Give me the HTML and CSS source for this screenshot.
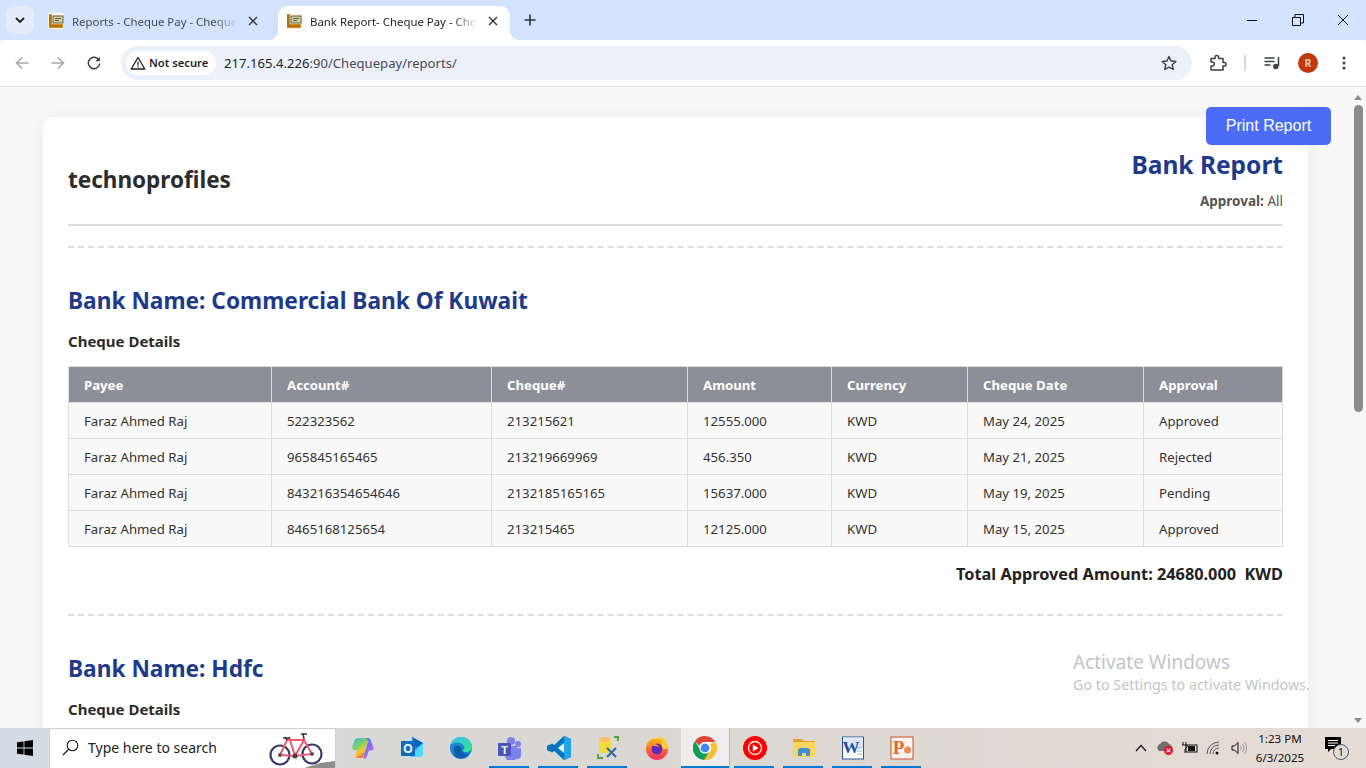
FILE: index.html
```html
<!DOCTYPE html>
<html lang="en">
<head>
<meta charset="utf-8">
<title>Bank Report- Cheque Pay</title>
<link rel="stylesheet" href="styles.css">
</head>
<body>
<svg class="defs" width="0" height="0">
  <symbol id="fav" viewBox="0 0 16 16">
    <rect x="0" y="0" width="16" height="16" fill="#fbf6e6"/>
    <path d="M1 1h3v10h11v4H1z" fill="#d98a1e"/>
    <path d="M2 2v11h12" fill="none" stroke="#8a5a10" stroke-width="1"/>
    <rect x="5" y="3" width="10" height="7" fill="#d8d0a6" stroke="#5f5a3a" stroke-width="1"/>
    <path d="M7 5.500h6M7 7.500h4" stroke="#5f5a3a" stroke-width="1"/>
  </symbol>
  <symbol id="x" viewBox="0 0 10 10"><path d="M1 1l8 8M9 1l-8 8" fill="none" stroke="currentColor" stroke-width="1.400"/></symbol>
</svg>

<header class="tabstrip">
  <button class="tabsearch"><svg width="10" height="6" viewBox="0 0 10 6"><path d="M1 1l4 4 4-4" fill="none" stroke="#1f1f1f" stroke-width="1.800"/></svg></button>
  <div class="tab">
    <svg class="favicon" width="16" height="16"><use href="#fav"/></svg>
    <span class="tab-title">Reports - Cheque Pay - Cheque Pay</span>
    <svg class="tab-close" width="10" height="10"><use href="#x"/></svg>
  </div>
  <div class="tab tab-active">
    <svg class="favicon" width="16" height="16"><use href="#fav"/></svg>
    <span class="tab-title">Bank Report- Cheque Pay - Cheque Pay</span>
    <svg class="tab-close" width="10" height="10"><use href="#x"/></svg>
  </div>
  <svg class="newtab" width="12" height="12" viewBox="0 0 12 12"><path d="M6 .5v11M.5 6h11" stroke="#333" stroke-width="1.600"/></svg>
  <div class="winctl">
    <svg width="12" height="12" viewBox="0 0 12 12"><path d="M1 6.500h10" stroke="#111" stroke-width="1"/></svg>
    <svg width="12" height="12" viewBox="0 0 12 12"><path d="M.5 3.500h8v8h-8zM3 3.500V.5h8.500V9H8.500" fill="none" stroke="#111" stroke-width="1"/></svg>
    <svg width="12" height="12" viewBox="0 0 12 12"><path d="M1 1l10 10M11 1L1 11" stroke="#111" stroke-width="1"/></svg>
  </div>
</header>

<nav class="toolbar">
  <svg class="navicon" width="14" height="14" viewBox="0 0 14 14"><path d="M13.500 7H1.500M7 1.500L1.500 7 7 12.500" fill="none" stroke="#a4a7ab" stroke-width="1.500"/></svg>
  <svg class="navicon" width="14" height="14" viewBox="0 0 14 14"><path d="M.5 7h12M7 1.500L12.500 7 7 12.500" fill="none" stroke="#a4a7ab" stroke-width="1.500"/></svg>
  <svg class="navicon" width="14" height="14" viewBox="0 0 14 14"><path d="M12 4.200A5.700 5.700 0 1 0 12.700 7.500" fill="none" stroke="#3c4043" stroke-width="1.500"/><path d="M12.800 .8v4.400H8.400z" fill="#3c4043"/></svg>
  <div class="omnibox">
    <div class="chip">
      <svg width="16" height="14" viewBox="0 0 16 14"><path d="M8 1.500L14.800 13H1.200z" fill="none" stroke="#1f1f1f" stroke-width="1.300" stroke-linejoin="round"/><path d="M8 5.500v4M8 10.300v1.300" stroke="#1f1f1f" stroke-width="1.200"/></svg>
      <span>Not secure</span>
    </div>
    <span class="url"><span class="url-host">217.165.4.226</span>:90/Chequepay/reports/</span>
    <svg class="star" width="16" height="16" viewBox="0 0 16 16"><path d="M8 1.500l2 4.500 4.800.5-3.600 3.200 1 4.800L8 12.100l-4.200 2.400 1-4.800L1.200 6.500 6 6z" fill="none" stroke="#3c4043" stroke-width="1.400" stroke-linejoin="round"/></svg>
  </div>
  <div class="tools">
    <svg width="18" height="18" viewBox="0 0 18 18"><path d="M2 4.500h4V3.200a1.800 1.800 0 0 1 3.600 0V4.500h4.400v4h1.200a1.800 1.800 0 0 1 0 3.600H14v4H2v-4h1.300a2 2 0 0 0 0-4H2z" fill="none" stroke="#3c4043" stroke-width="1.500" stroke-linejoin="round"/></svg>
    <span class="tool-sep"></span>
    <svg width="16" height="14" viewBox="0 0 16 14"><path d="M.5 2h10M.5 5.500h10M.5 9h6" stroke="#3c4043" stroke-width="1.400"/><path d="M14.500 1v9" stroke="#3c4043" stroke-width="1.500"/><circle cx="11.800" cy="10.500" r="2.700" fill="#3c4043"/></svg>
    <span class="avatar">R</span>
    <svg width="4" height="14" viewBox="0 0 4 14"><circle cx="2" cy="2" r="1.500" fill="#3c4043"/><circle cx="2" cy="7" r="1.500" fill="#3c4043"/><circle cx="2" cy="12" r="1.500" fill="#3c4043"/></svg>
  </div>
</nav>

<div class="viewport">
  <main class="page">
    <button class="print">Print Report</button>
    <article class="card">
      <div class="report-head">
        <div class="company">technoprofiles</div>
        <div class="report-meta">
          <h1>Bank Report</h1>
          <p><b>Approval:</b> All</p>
        </div>
      </div>

      <section class="bank">
        <h2>Bank Name: Commercial Bank Of Kuwait</h2>
        <h3>Cheque Details</h3>
        <table>
          <colgroup>
            <col class="c1"><col class="c2"><col class="c3"><col class="c4"><col class="c5"><col class="c6"><col class="c7">
          </colgroup>
          <thead>
            <tr><th>Payee</th><th>Account#</th><th>Cheque#</th><th>Amount</th><th>Currency</th><th>Cheque Date</th><th>Approval</th></tr>
          </thead>
          <tbody>
            <tr><td>Faraz Ahmed Raj</td><td>522323562</td><td>213215621</td><td>12555.000</td><td>KWD</td><td>May 24, 2025</td><td>Approved</td></tr>
            <tr><td>Faraz Ahmed Raj</td><td>965845165465</td><td>213219669969</td><td>456.350</td><td>KWD</td><td>May 21, 2025</td><td>Rejected</td></tr>
            <tr><td>Faraz Ahmed Raj</td><td>843216354654646</td><td>2132185165165</td><td>15637.000</td><td>KWD</td><td>May 19, 2025</td><td>Pending</td></tr>
            <tr><td>Faraz Ahmed Raj</td><td>8465168125654</td><td>213215465</td><td>12125.000</td><td>KWD</td><td>May 15, 2025</td><td>Approved</td></tr>
          </tbody>
        </table>
        <div class="total">Total Approved Amount: 24680.000&nbsp; KWD</div>
      </section>

      <section class="bank">
        <h2>Bank Name: Hdfc</h2>
        <h3>Cheque Details</h3>
      </section>
    </article>
    <div class="activate">
      <div class="activate-big">Activate Windows</div>
      <div class="activate-small">Go to Settings to activate Windows.</div>
    </div>
  </main>
  <aside class="scrollbar">
    <span class="arrow-up"></span>
    <span class="thumb"></span>
    <span class="arrow-down"></span>
  </aside>
</div>

<footer class="taskbar">
  <div class="start">
    <svg width="16" height="16" viewBox="0 0 16 16"><path d="M0 2.300l6.600-.9v6.200H0zM7.400 1.300L16 0v7.600H7.400zM0 8.400h6.600v6.200L0 13.700zM7.400 8.400H16V16l-8.600-1.300z" fill="#000"/></svg>
  </div>
  <div class="searchbox">
    <svg width="17" height="17" viewBox="0 0 17 17"><circle cx="10.500" cy="6.500" r="5.300" fill="none" stroke="#222" stroke-width="1.100"/><path d="M6.700 10.300L1 16" stroke="#222" stroke-width="1.300"/></svg>
    <span>Type here to search</span>
    <svg class="bike" width="67" height="42" viewBox="0 0 67 42">
      <path d="M30 42L52 35 67 33V42z" fill="#8e8e8e"/>
      <circle cx="12" cy="27" r="9.500" fill="none" stroke="#3a3a66" stroke-width="2.200"/>
      <circle cx="44" cy="26" r="9.500" fill="none" stroke="#3a3a66" stroke-width="2.200"/>
      <path d="M12 27L19 12H36L27 28zM36 12L44 26M27 28L44 26M27 28L21 9" fill="none" stroke="#f0596f" stroke-width="2"/>
      <path d="M15 10h7M33 6h6M35 6l1 5M19 12l-2-3" fill="none" stroke="#33334d" stroke-width="1.600"/>
      <circle cx="12" cy="27" r="2" fill="#555"/><circle cx="44" cy="26" r="2" fill="#555"/><circle cx="27" cy="28" r="2.500" fill="#444"/>
    </svg>
  </div>
  <div class="apps">
    <div class="app">
      <svg width="24" height="24" viewBox="0 0 24 24">
        <defs><linearGradient id="cp" x1="0" y1="0" x2="1" y2="1"><stop offset="0" stop-color="#2c8ee8"/><stop offset=".5" stop-color="#8a6cf0"/><stop offset="1" stop-color="#f06ac0"/></linearGradient><linearGradient id="cp2" x1="0" y1="0" x2="0.600" y2="1"><stop offset="0" stop-color="#3ab8e8"/><stop offset=".45" stop-color="#7fd06a"/><stop offset=".75" stop-color="#f5c82c"/><stop offset="1" stop-color="#f0553c"/></linearGradient></defs>
        <path d="M7 2h8c1.500 0 2 1 2.300 2l-5 16c-.4 1.300-1.300 2-2.500 2H6c-1.500 0-2-1-1.600-2L6 14H4C1.500 14 1 12 1.500 10L3.500 4.500C4 3 5.500 2 7 2z" fill="url(#cp2)"/>
        <path d="M13 2h4c1.500 0 2.500 1 3 2.500l2.500 7c.6 2-.5 3-2.500 3h-2l-3 8h-3l5-17C17 3.500 15 2 13 2z" fill="url(#cp)"/>
      </svg>
    </div>
    <div class="app">
      <svg width="24" height="24" viewBox="0 0 24 24">
        <path d="M12 1l11 6v11a2 2 0 0 1-2 2H10z" fill="#28a8ea"/><path d="M10 20l13-13v11a3 3 0 0 1-3 3H10z" fill="#50d9ff"/><path d="M12 1l11 6-7 5z" fill="#0364b8"/>
        <rect x="1" y="5" width="14" height="15" fill="#0f6cbd"/>
        <text class="icon-letter" x="8" y="17" font-size="12" fill="#fff" text-anchor="middle">O</text>
      </svg>
    </div>
    <div class="app">
      <svg width="24" height="24" viewBox="0 0 24 24">
        <defs><linearGradient id="ed" x1="0" y1="0" x2="1" y2="1"><stop offset="0" stop-color="#35c1f1"/><stop offset="1" stop-color="#36e38a"/></linearGradient></defs>
        <circle cx="12" cy="12" r="11" fill="#1b87d0"/>
        <path d="M1.500 9C3 3.500 8 1 12 1c6 0 11 4.500 11 10 0 3-2.500 5-6 5-2 0-3.500-.7-4-1.500C15 14 16 12 15 10 13.500 7 7 4.500 1.500 9z" fill="url(#ed)"/>
        <path d="M5 11c3-2 7-1.500 7.500 1.500.5 3 2 6 7 5.500-2 3-5 5-8.500 4.500C6 22 4 16 5 11z" fill="#0c5ea8"/>
      </svg>
    </div>
    <div class="app">
      <svg width="24" height="24" viewBox="0 0 24 24">
        <circle cx="20" cy="8" r="3" fill="#7b83eb"/><path d="M15 12h8v7a4 4 0 0 1-8 0z" fill="#7b83eb"/>
        <circle cx="13" cy="5" r="4" fill="#7b83eb"/><path d="M7 10h12v9a6 6 0 0 1-12 1z" fill="#7b83eb"/>
        <rect x="0" y="7" width="13" height="13" rx="1" fill="#4b53bc"/>
        <text class="icon-letter" x="6.500" y="17.500" font-size="11" fill="#fff" text-anchor="middle">T</text>
      </svg>
    </div>
    <div class="app">
      <svg width="24" height="24" viewBox="0 0 24 24">
        <path d="M17 0l7 3v18l-7 3L5 13l-3 2.500L0 14v-4l2-1.500L5 11z" fill="#0078c8"/>
        <path d="M17 0l7 3v18l-7 3z" fill="#22a3ea"/>
        <path d="M17 7l-6 5 6 5z" fill="#fff" opacity=".9"/>
        <path d="M11 12l-6-4.500L2 9.500 6.500 12 2 14.500l3 2z" fill="#0d6db3"/>
      </svg>
    </div>
    <div class="app">
      <svg width="24" height="24" viewBox="0 0 24 24">
        <rect x="3" y="2" width="12" height="15" rx="3" fill="#f3dc3c"/><ellipse cx="9" cy="3.500" rx="6" ry="2.500" fill="#f4c26a"/>
        <path d="M18 1h4v4M2 18v4h5" fill="none" stroke="#4f9f3f" stroke-width="1.800"/>
        <path d="M11 12l9 9M20 12l-9 9" stroke="#2c6fa8" stroke-width="2.200"/>
      </svg>
    </div>
    <div class="app">
      <svg width="24" height="24" viewBox="0 0 24 24">
        <defs><linearGradient id="ff" x1="0" y1="0" x2="0" y2="1"><stop offset="0" stop-color="#ffc21a"/><stop offset=".5" stop-color="#ff6a2a"/><stop offset="1" stop-color="#ee2a6e"/></linearGradient></defs>
        <circle cx="12" cy="13" r="11" fill="url(#ff)"/>
        <path d="M15 0c5 3 8 8 8 13h-6c0-4-1-8-2-13z" fill="#ffce2a"/>
        <circle cx="12" cy="13" r="5.500" fill="#5b2bb5"/>
        <path d="M2 8c2-4 5-5 8-5-2 2-2 4-1 5 3 0 5 2 5 3" fill="#ff9a1f"/>
      </svg>
    </div>
    <div class="app app-current">
      <svg width="24" height="24" viewBox="0 0 24 24">
        <circle cx="12" cy="12" r="12" fill="#fff"/>
        <path d="M12 0a12 12 0 0 1 10.400 6H12a6 6 0 0 0-5.700 4.100L2.100 5A12 12 0 0 1 12 0z" fill="#db4437"/>
        <path d="M22.400 6A12 12 0 0 1 11 24l5.200-8a6 6 0 0 0 .6-7.900z" fill="#fbc02d"/>
        <path d="M2.100 5l5 8.500a6 6 0 0 0 9.100 2.500L11 24A12 12 0 0 1 2.100 5z" fill="#0f9d58"/>
        <circle cx="12" cy="12" r="5" fill="#4285f4" stroke="#fff" stroke-width="1.200"/>
      </svg>
    </div>
    <div class="app">
      <svg width="24" height="24" viewBox="0 0 24 24">
        <circle cx="12" cy="12" r="12" fill="#f00"/><circle cx="12" cy="12" r="6.500" fill="none" stroke="#fff" stroke-width="1.300"/><path d="M9.800 8.500v7l5.700-3.500z" fill="#fff"/>
      </svg>
    </div>
    <div class="app">
      <svg width="24" height="24" viewBox="0 0 24 24">
        <path d="M1 3h9l2 2h11v3H1z" fill="#e0a526"/><rect x="1" y="6" width="22" height="15" rx="1" fill="#fbd65c"/>
        <path d="M6 20v-5a3 3 0 0 1 3-3h6a3 3 0 0 1 3 3v5h-4v-3h-4v3z" fill="#3f8fd2"/>
      </svg>
    </div>
    <div class="app">
      <svg width="24" height="24" viewBox="0 0 24 24">
        <rect x="1.500" y="1" width="21" height="22" fill="#fff" stroke="#2a5699"/><path d="M2 1.500h20v11H2z" fill="#dce6f4"/>
        <path d="M16 12h5M16 15h5M16 18h5" stroke="#9db7dc"/>
        <text class="icon-serif" x="10" y="17" font-size="17" fill="#1f4f9c" text-anchor="middle">W</text>
      </svg>
    </div>
    <div class="app">
      <svg width="24" height="24" viewBox="0 0 24 24">
        <rect x="1" y="1" width="22" height="22" fill="#fdf3ee" stroke="#c8502a"/>
        <text class="icon-serif" x="8.500" y="18" font-size="19" fill="#e0682e" text-anchor="middle">P</text>
        <circle cx="17.500" cy="14" r="3.500" fill="#e88a5a"/>
      </svg>
    </div>
  </div>
  <div class="tray">
    <span class="tray-icon"><svg width="12" height="8" viewBox="0 0 12 8"><path d="M1 7l5-5.500L11 7" fill="none" stroke="#111" stroke-width="1.200"/></svg></span>
    <span class="tray-icon"><svg width="17" height="16" viewBox="0 0 17 16"><path d="M2 11a4 4 0 0 1 1-7 5 5 0 0 1 9 0 4 4 0 0 1 2 7z" fill="#6e6e6e"/><circle cx="11.500" cy="10.500" r="4.500" fill="#e81123"/><path d="M9.700 8.700l3.600 3.600M13.300 8.700l-3.600 3.600" stroke="#fff" stroke-width="1.100"/></svg></span>
    <span class="tray-icon"><svg width="16" height="12" viewBox="0 0 16 12"><rect x="4" y="3" width="11" height="7" fill="none" stroke="#111"/><rect x="6" y="4" width="7" height="5" fill="#111"/><path d="M1 0v3M4 0v3M0 3h5v2L3 7v4" fill="none" stroke="#111"/></svg></span>
    <span class="tray-icon"><svg width="16" height="14" viewBox="0 0 16 14"><path d="M1 13A12 12 0 0 1 13 1M4 13A9 9 0 0 1 13 4M7 13A6 6 0 0 1 13 7" fill="none" stroke="#555" stroke-width="1"/><circle cx="11" cy="12" r="1.500" fill="#111"/></svg></span>
    <span class="tray-icon"><svg width="16" height="14" viewBox="0 0 16 14"><path d="M1 5h2.500L7 1.500v11L3.500 9H1z" fill="none" stroke="#111"/><path d="M9.500 5a3 3 0 0 1 0 4M11.500 3a6 6 0 0 1 0 8M13.500 1.500a8 8 0 0 1 0 11" fill="none" stroke="#9a9a9a"/></svg></span>
    <div class="clock"><span>1:23 PM</span><span>6/3/2025</span></div>
    <div class="notify">
      <svg width="16" height="15" viewBox="0 0 16 15"><path d="M0 0h16v12H6l-3 3v-3H0z" fill="#000"/><path d="M3 3.500h10M3 6h10M3 8.500h7" stroke="#fff"/></svg>
      <span class="notify-badge">1</span>
    </div>
  </div>
</footer>
</body>
</html>
```
FILE: styles.css
```css
* { box-sizing: border-box; }
html, body { margin: 0; height: 100%; overflow: hidden; }
body {
  width: 1366px;
  height: 768px;
  display: flex;
  flex-direction: column;
  font-family: "Noto Sans", "Open Sans", sans-serif;
  color: #333;
  background: #f8f8f8;
}
.defs { position: absolute; }
button { font-family: inherit; border: 0; }

/* Browser tab strip */
.tabstrip {
  height: 40px;
  flex: none;
  display: flex;
  align-items: flex-end;
  background: #d3e3fd;
  padding-left: 6px;
}
.tabsearch {
  width: 28px;
  height: 28px;
  margin-bottom: 6px;
  border-radius: 8px;
  background: #e3ecfb;
  padding: 0;
  display: flex;
  align-items: center;
  justify-content: center;
}
.tab {
  width: 232px;
  height: 34px;
  display: flex;
  align-items: center;
  margin-left: 4px;
  padding: 0 12px 4px 10px;
  font-size: 11.400px;
  color: #45494e;
  position: relative;
}
.tab + .tab { margin-left: 8px; }
.tab-active {
  background: #fff;
  color: #1f1f1f;
  border-radius: 10px 10px 0 0;
  padding-left: 8px;
}
.tab-active::before,
.tab-active::after {
  content: "";
  position: absolute;
  bottom: 0;
  width: 10px;
  height: 10px;
}
.tab-active::before { left: -10px; background: radial-gradient(circle at 0 0, transparent 10px, #fff 10.500px); }
.tab-active::after { right: -10px; background: radial-gradient(circle at 100% 0, transparent 10px, #fff 10.500px); }
.favicon { flex: none; margin-right: 8px; }
.tab-title {
  flex: 1;
  min-width: 0;
  white-space: nowrap;
  overflow: hidden;
  -webkit-mask-image: linear-gradient(90deg, #000 85%, transparent 100%);
  mask-image: linear-gradient(90deg, #000 85%, transparent 100%);
}
.tab-close { flex: none; margin-left: 10px; color: #333; }
.newtab { margin: 0 0 14px 14px; }
.winctl {
  margin-left: auto;
  width: 137px;
  height: 40px;
  display: flex;
  align-items: center;
  justify-content: space-between;
  padding: 0 17px 0 17px;
}

/* Browser toolbar */
.toolbar {
  height: 47px;
  flex: none;
  display: flex;
  align-items: center;
  background: #fff;
  border-bottom: 1px solid #dedede;
  border-radius: 8px 8px 0 0;
  padding: 0 0 1px 15px;
  position: relative;
}
.navicon { flex: none; margin-right: 22px; }
.omnibox {
  width: 1071px;
  height: 34px;
  margin-left: -2px;
  display: flex;
  align-items: center;
  background: #ebf1fb;
  border-radius: 17px;
  padding: 0 15px 0 5px;
}
.chip {
  height: 24px;
  width: 90px;
  flex: none;
  display: flex;
  align-items: center;
  gap: 3px;
  padding-left: 4px;
  background: #fff;
  border-radius: 12px;
  font-size: 11.200px;
  font-weight: 600;
  color: #1f1f1f;
  white-space: nowrap;
}
.url { margin-left: 8px; font-size: 13.100px; color: #474b50; white-space: nowrap; }
.url-host { color: #1f1f1f; }
.star { margin-left: auto; }
.tools {
  flex: 1;
  display: flex;
  align-items: center;
  padding-left: 17px;
}
.tool-sep { width: 2px; height: 16px; background: #c9dcf8; margin: 0 18px 0 17px; }
.avatar {
  width: 20px;
  height: 20px;
  margin: 0 24px 0 18px;
  border-radius: 50%;
  background: #c0390b;
  color: #f7d9cf;
  font-size: 10px;
  font-weight: 600;
  display: flex;
  align-items: center;
  justify-content: center;
}

/* Page viewport */
.viewport {
  flex: 1;
  min-height: 0;
  display: flex;
}
.page {
  flex: 1;
  min-width: 0;
  position: relative;
  overflow: hidden;
  padding: 30px 43px 0;
  background: #f8f8f8;
}
.print {
  position: absolute;
  top: 20px;
  left: 1206px;
  width: 125px;
  height: 38px;
  padding: 0;
  background: #4a6cf7;
  color: #fff;
  border-radius: 5px;
  font-size: 16px;
  font-family: "Liberation Sans", sans-serif;
  z-index: 2;
}
.card {
  width: 1265px;
  background: #fff;
  border-radius: 10px;
  box-shadow: 0 0 20px rgba(0, 0, 0, .05);
  padding: 30px 25px 60px;
}
.report-head {
  height: 79px;
  display: flex;
  justify-content: space-between;
  align-items: center;
  padding-bottom: 12px;
  border-bottom: 2px solid #ddd;
}
.company { font-size: 22.500px; font-weight: 700; color: #2c2c2c; line-height: 32px; }
.report-meta { text-align: right; align-self: flex-start; }
.report-meta h1 { margin: 0; font-size: 24.500px; font-weight: 700; line-height: 36px; color: #1e3a8a; }
.report-meta p { margin: 9px 0 0; font-size: 13.500px; line-height: 18px; color: #555; }
.bank {
  margin-top: 20px;
  padding-top: 35px;
  border-top: 2px dashed #ddd;
}
.bank h2 { margin: 0; font-size: 22.700px; line-height: 36px; font-weight: 700; color: #1e3a8a; }
.bank h3 { margin: 12px 0 0; font-size: 15px; line-height: 20px; font-weight: 700; color: #2c2c2c; }
table {
  width: 1214px;
  margin-top: 15px;
  table-layout: fixed;
  border-collapse: collapse;
  font-size: 13.200px;
}
.c1 { width: 203px; }
.c2 { width: 220px; }
.c3 { width: 196px; }
.c4 { width: 144px; }
.c5 { width: 136px; }
.c6 { width: 176px; }
.c7 { width: 139px; }
th, td {
  height: 36px;
  padding: 0 15px;
  border: 1px solid #ddd;
  text-align: left;
  white-space: nowrap;
}
th { background: #8c8f98; color: #fff; font-weight: 700; }
td { background: #f9f9f9; color: #333; }
.total {
  margin-top: 15px;
  padding-bottom: 8px;
  text-align: right;
  font-size: 16.300px;
  line-height: 24px;
  font-weight: 700;
  color: #222;
}
.activate {
  position: absolute;
  left: 1073px;
  top: 563px;
  color: #c4c4c4;
  white-space: nowrap;
}
.activate-big { font-size: 19px; line-height: 25px; }
.activate-small { font-size: 14.300px; line-height: 20px; }

/* Scrollbar */
.scrollbar {
  width: 15px;
  flex: none;
  position: relative;
  background: #f8f8f8;
}
.arrow-up, .arrow-down {
  position: absolute;
  left: 3px;
  width: 0;
  height: 0;
  border-left: 4.500px solid transparent;
  border-right: 4.500px solid transparent;
}
.arrow-up { top: 8px; border-bottom: 5px solid #8a8a8a; }
.arrow-down { bottom: 5px; border-top: 5px solid #8a8a8a; }
.thumb {
  position: absolute;
  left: 3px;
  top: 18px;
  width: 9px;
  height: 307px;
  border-radius: 5px;
  background: #8b8b8b;
}

/* Windows taskbar */
.taskbar {
  height: 40px;
  flex: none;
  display: flex;
  align-items: stretch;
  background: linear-gradient(90deg, #d2dce6 0, #d9d8d5 30%, #ddd8d2 60%, #e5dcd5 100%);
  color: #111;
}
.start {
  width: 49px;
  flex: none;
  display: flex;
  align-items: center;
  justify-content: center;
}
.searchbox {
  width: 287px;
  flex: none;
  display: flex;
  align-items: center;
  background: #fff;
  border: 1px solid #cfcfcf;
  border-bottom: 0;
  padding: 0 0 2px 12px;
  font-size: 14px;
  color: #222;
  position: relative;
  overflow: hidden;
}
.searchbox span { margin-left: 9px; }
.bike { position: absolute; right: 0; bottom: -2px; }
.apps {
  display: flex;
  margin-left: 2px;
}
.app {
  width: 49px;
  display: flex;
  align-items: center;
  justify-content: center;
  position: relative;
}
.app:nth-child(n+4)::after {
  content: "";
  position: absolute;
  bottom: 0;
  left: 4px;
  right: 5px;
  height: 2px;
  background: #0078d4;
}
.app:nth-child(7)::after { display: none; }
.app-current { background: #efeeec; border-right: 1px solid #bdbab6; }
.app-current::after { left: 0 !important; right: 0 !important; }
.icon-letter { font-family: "Liberation Sans", sans-serif; font-weight: 700; }
.icon-serif { font-family: "Liberation Serif", serif; font-weight: 700; }
.tray {
  flex: 1;
  display: flex;
  align-items: center;
  justify-content: flex-end;
  padding-right: 17px;
}
.tray-icon {
  width: 24.500px;
  display: flex;
  justify-content: center;
}
.clock {
  width: 58px;
  display: flex;
  flex-direction: column;
  align-items: center;
  font-size: 11.600px;
  line-height: 19px;
  margin: 0 16px 0 0;
}
.notify { position: relative; width: 24px; height: 24px; }
.notify svg { position: absolute; left: 0; top: 1px; }
.notify-badge {
  position: absolute;
  left: 8px;
  top: 8px;
  width: 16px;
  height: 16px;
  border-radius: 50%;
  border: 1px solid #555;
  background: #ddd;
  font-size: 11px;
  line-height: 14px;
  text-align: center;
}
```
